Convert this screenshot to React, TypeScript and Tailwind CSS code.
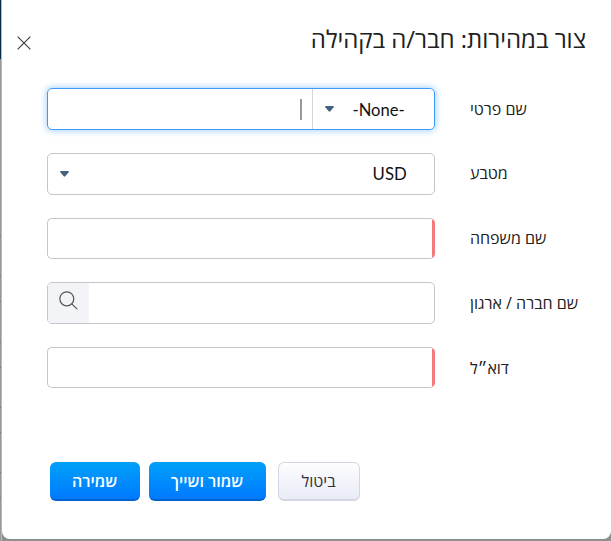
import React from 'react';

interface FieldRowProps {
  label: string;
  children: React.ReactNode;
}

const FieldRow: React.FC<FieldRowProps> = ({ label, children }) => (
  <div className="flex h-[42px] gap-[35px]">
    <label className="w-[141px] whitespace-nowrap pt-[10.5px] text-left text-[16px] leading-5 text-[#212121]">
      {label}
    </label>
    <div className="w-[388px]">{children}</div>
  </div>
);

const Caret: React.FC = () => (
  <svg width="9" height="6" viewBox="0 0 9 6" className="shrink-0 text-[#42627f]">
    <path
      d="M.7 0h7.6q.9.4.4 1.3L5.3 5.3q-.8.9-1.6 0L.3 1.3Q-.2.4.7 0Z"
      fill="currentColor"
    />
  </svg>
);

// Row lines of the list that stays visible behind the dialog
const BackdropStrip: React.FC = () => (
  <div className="flex h-[541px] w-[2px] shrink-0 flex-col border-r border-[#b9b9b9] bg-[#979797]">
    <div className="h-[59px] bg-[#0b2b4b]" />
    <div className="h-[178px] border-b border-[#777]" />
    <div className="h-[40px] border-b border-[#777]" />
    <div className="h-[25px] border-b border-[#777]" />
    <div className="h-[41px] border-b border-[#777]" />
    <div className="h-[25px] border-b border-[#777]" />
    <div className="h-[40px] border-b border-[#777]" />
    <div className="h-[25px] border-b border-[#777]" />
    <div className="h-[40px] border-b border-[#777]" />
    <div className="h-[25px] border-b border-[#777]" />
  </div>
);

const App: React.FC = () => {
  return (
    <div
      dir="rtl"
      className="flex h-[541px] w-[611px] justify-end overflow-hidden bg-[#8f8f8f] font-['Open_Sans',sans-serif]"
    >
      <div className="h-[539px] w-[609px] rounded-b-[8px] bg-white">
        {/* Header */}
        <div className="flex h-[88px] justify-between pl-[15px] pr-[25px]">
          <h1 className="pt-[24px] text-[24px] leading-[30px] tracking-[-0.03px] text-[#212121]">
            צור במהירות: חבר/ה בקהילה
          </h1>
          <button type="button" aria-label="סגור" className="mt-[36px] h-[14px] w-[14px]">
            <svg width="14" height="14" viewBox="0 0 14 14" fill="none" stroke="#444">
              <path d="M.6.6l12.8 12.8M13.4.6L.6 13.4" strokeWidth="1.2" />
            </svg>
          </button>
        </div>

        {/* Fields */}
        <div className="flex flex-col gap-[22.75px]">
          <FieldRow label="שם פרטי">
            <div className="flex h-[42px] items-center rounded-[5px] border border-[#3d9bf5] shadow-[0_0_6px_1px_rgba(61,155,245,0.45)]">
              <div className="flex h-full w-[122px] items-center justify-between border-l border-[#d5d5d5] pl-[12px] pr-[29px]">
                <span dir="ltr" className="-mt-px origin-right scale-x-[0.92] font-[Lato] text-[18px] leading-5 text-[#111]">
                  -None-
                </span>
                <Caret />
              </div>
              <div className="mr-[10px] h-[21px] w-[2px] bg-[#999]" />
            </div>
          </FieldRow>
          <FieldRow label="מטבע">
            <div className="flex h-[42px] items-center justify-between rounded-[5px] border border-[#c5c5cb] pl-[12px] pr-[27px]">
              <span className="-mt-px origin-right scale-x-[0.93] font-[Lato] text-[18px] leading-5 text-[#111]">
                USD
              </span>
              <Caret />
            </div>
          </FieldRow>
          <FieldRow label="שם משפחה">
            <div className="flex h-[41px] overflow-hidden rounded-[5px] border border-r-0 border-[#c5c5cb]">
              <div className="h-full w-[3px] bg-[#f27a7a]" />
            </div>
          </FieldRow>
          <FieldRow label="שם חברה / ארגון">
            <div className="flex h-[42px] justify-end overflow-hidden rounded-[5px] border border-[#c5c5cb]">
              <div className="flex w-[41px] justify-center bg-[#f3f4f7] pt-[8px]">
                <svg width="19" height="19" viewBox="0 0 19 19" fill="none" stroke="#555" strokeWidth="1.2">
                  <circle cx="7.8" cy="7.8" r="7" />
                  <path d="M12.8 12.8l5.4 5.4" />
                </svg>
              </div>
            </div>
          </FieldRow>
          <FieldRow label="דוא״ל">
            <div className="flex h-[41px] overflow-hidden rounded-[5px] border border-r-0 border-[#c5c5cb]">
              <div className="h-full w-[3px] bg-[#f27a7a]" />
            </div>
          </FieldRow>
        </div>

        {/* Actions */}
        <div className="mt-[73px] flex gap-[9px] pr-[251.5px] text-[16px]">
          <button
            type="button"
            className="ml-[3px] h-[39px] w-[82px] rounded-[6px] border border-b-2 border-[#d3d7e3] bg-linear-to-b from-[#fdfdff] to-[#e9ecf6] text-[#333]"
          >
            ביטול
          </button>
          <button
            type="button"
            className="h-[39px] w-[117px] rounded-[6px] border-b-2 border-[#0062d1] bg-linear-to-b from-[#02a0f8] to-[#0279ff] pt-px font-semibold text-white"
          >
            שמור ושייך
          </button>
          <button
            type="button"
            className="h-[39px] w-[90px] rounded-[6px] border-b-2 border-[#0062d1] bg-linear-to-b from-[#02a0f8] to-[#0279ff] pt-px font-semibold text-white"
          >
            שמירה
          </button>
        </div>
      </div>
      <BackdropStrip />
    </div>
  );
};

export default App;
